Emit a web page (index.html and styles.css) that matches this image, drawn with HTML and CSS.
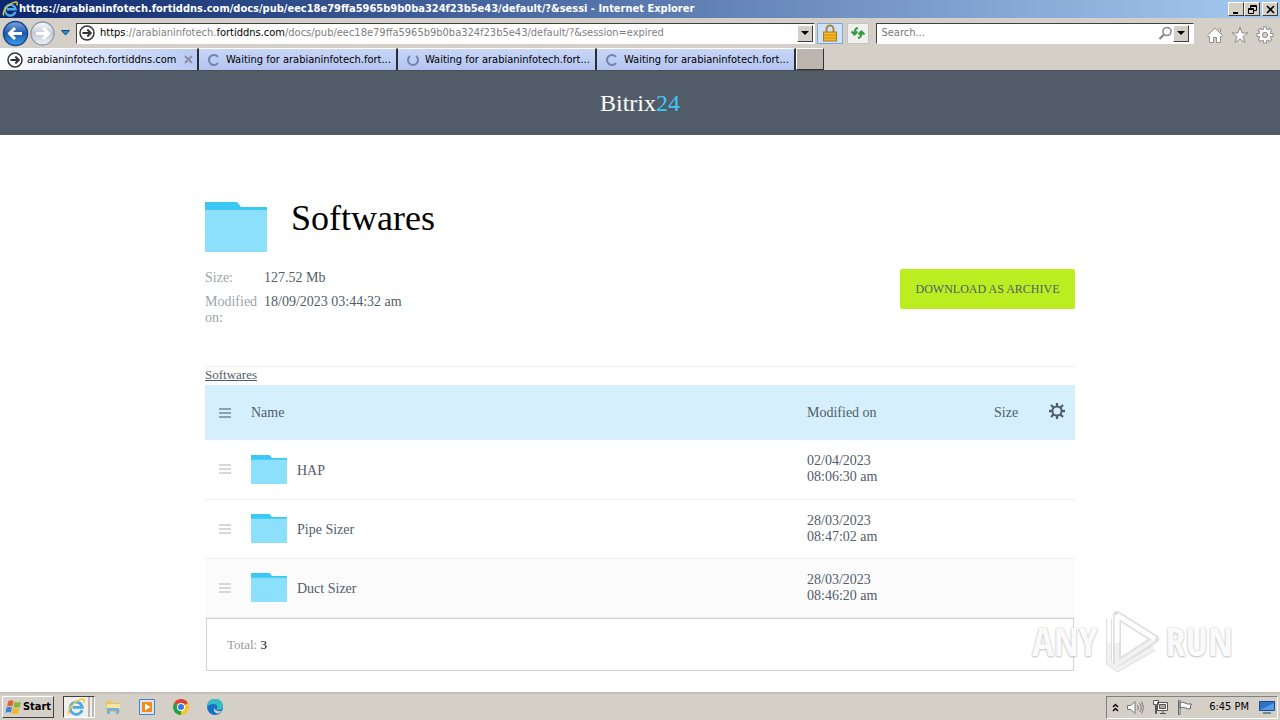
FILE: index.html
```html
<!DOCTYPE html>
<html lang="en">
<head>
<meta charset="utf-8">
<title>Softwares - Bitrix24</title>
<link rel="stylesheet" href="styles.css">
</head>
<body>
<svg class="defs" width="0" height="0" aria-hidden="true">
  <linearGradient id="blueball" x1="0" y1="0" x2="0" y2="1"><stop offset="0" stop-color="#7ba6dd"/><stop offset=".5" stop-color="#1d57ae"/><stop offset="1" stop-color="#3fa0ee"/></linearGradient>
  <linearGradient id="greyball" x1="0" y1="0" x2="0" y2="1"><stop offset="0" stop-color="#fafbfd"/><stop offset=".5" stop-color="#c3cbd8"/><stop offset="1" stop-color="#eef2f8"/></linearGradient>
  <symbol id="ie" viewBox="0 0 16 16"><path d="M13.400 10.800A5.400 5.400 0 1 1 13.600 8.300H5" fill="none" stroke="#4aa9e6" stroke-width="2.400"/><path d="M2 14.500C-1 12 6 3 12 1.300c4-1.200 3.600 1.500 2.600 3" fill="none" stroke="#f2c83c" stroke-width="1.400"/></symbol>
  <symbol id="site" viewBox="0 0 16 16"><circle cx="8" cy="8" r="7" fill="#fff" stroke="#333" stroke-width="1.500"/><path d="M3.500 8h8M8.300 4.500 11.800 8l-3.500 3.500" fill="none" stroke="#333" stroke-width="1.900"/></symbol>
  <symbol id="spin" viewBox="0 0 12 12"><path d="M10 3A5 5 0 1 0 10 9" fill="none" stroke="#7484b0" stroke-width="2"/></symbol>
  <symbol id="down" viewBox="0 0 8 4"><path d="M0 0h8L4 4z"/></symbol>
  <symbol id="folder" viewBox="0 0 62 50"><path d="M0 0h31q2 0 3.500 3l1.500 2h26v10H0z" fill="#3bc8f5"/><path d="M0 8h62v41q0 1-1 1H1q-1 0-1-1z" fill="#8ce0fb"/></symbol>
  <symbol id="grip" viewBox="0 0 12 10"><path d="M0 1h12M0 5h12M0 9h12" stroke="currentColor" stroke-width="2"/></symbol>
</svg>

<header class="window">
  <div class="titlebar">
    <svg class="i16"><use href="#ie"/></svg>
    <span class="caption">https://arabianinfotech.fortiddns.com/docs/pub/eec18e79ffa5965b9b0ba324f23b5e43/default/?&amp;sessi - Internet Explorer</span>
    <div class="winbtns">
      <button aria-label="Minimize"><svg width="9" height="9"><path d="M1 7h5v2H1z"/></svg></button>
      <button aria-label="Restore"><svg width="9" height="9" fill="none" stroke="#000"><path d="M2.500 3V.5h6v5H6M2.500 1.500h6M.5 3.500h5v5h-5zM.5 4.500h5"/></svg></button>
      <button class="close" aria-label="Close"><svg width="9" height="9" stroke="#000" stroke-width="1.600"><path d="M1 1l7 7M8 1 1 8"/></svg></button>
    </div>
  </div>
  <div class="navbar">
    <button class="plain" aria-label="Back"><svg width="27" height="27"><circle cx="13.500" cy="13.500" r="12" fill="url(#blueball)" stroke="#17468f" stroke-width="1.500"/><path d="M20 13.500H8M13 8l-5.500 5.500L13 19" fill="none" stroke="#fff" stroke-width="3"/></svg></button>
    <button class="plain" aria-label="Forward"><svg width="27" height="27"><circle cx="13.500" cy="13.500" r="11.500" fill="url(#greyball)" stroke="#8c98ab" stroke-width="1.300"/><path d="M7 13.500h12M14 8l5.500 5.500L14 19" fill="none" stroke="#fff" stroke-width="3"/></svg></button>
    <button class="plain recent" aria-label="Recent pages"><svg width="9" height="6"><path d="M.5.5h8L4.500 5z" fill="#1595c7" stroke="#174a78"/></svg></button>
    <div class="field address">
      <svg class="i16"><use href="#site"/></svg>
      <span class="url"><b>https</b>://arabianinfotech.<b>fortiddns.com</b>/docs/pub/eec18e79ffa5965b9b0ba324f23b5e43/default/?&amp;session=expired</span>
      <button class="drop" aria-label="Show addresses"><svg width="8" height="4"><use href="#down"/></svg></button>
    </div>
    <button class="tool lock" aria-label="Security report"><svg width="16" height="18"><path d="M4.500 9V5a3.500 3.500 0 0 1 7 0v4" fill="none" stroke="#a9873c" stroke-width="2"/><rect x="1.500" y="8" width="13" height="9" fill="#f3b829" stroke="#b07a12"/><path d="M2 11h12M2 14h12" stroke="#d08e12"/></svg></button>
    <button class="tool" aria-label="Refresh"><svg width="16" height="14" fill="none" stroke="#2f9b3e" stroke-width="2"><path d="M8 2Q4.500 2 4.500 8M1.500 5.500l3 3 3-3M8 12q3.500 0 3.500-6M8.500 8.500l3-3 3 3"/></svg></button>
    <div class="field search">
      <input type="text" placeholder="Search..." aria-label="Search">
      <svg width="15" height="15" fill="none" stroke="#888"><circle cx="9" cy="5.500" r="4" stroke-width="1.600"/><path d="M6 8.500 1.500 13" stroke-width="2.300"/></svg>
      <button class="drop" aria-label="Search providers"><svg width="8" height="4"><use href="#down"/></svg></button>
    </div>
    <div class="tools">
      <button class="plain" aria-label="Home"><svg width="18" height="18" fill="#fff" stroke="#909090"><path d="M1.500 9.500 9 2l7.500 7.500-1.500 1.500-.5-.5v6h-4v-5h-3v5h-4v-6l-.5.5zM12.500 3h2v3"/></svg></button>
      <button class="plain" aria-label="Favorites"><svg width="18" height="18" fill="#fff" stroke="#909090"><path d="M9 1l2 6h6l-5 3.500 2 6-5-3.500-5 3.500 2-6L1 7h6z"/></svg></button>
      <button class="plain" aria-label="Tools"><svg width="18" height="18" fill="none"><path d="M9 .5v17M.5 9h17M3 3l12 12M3 15 15 3" stroke="#909090" stroke-width="4"/><circle cx="9" cy="9" r="6" fill="#fff" stroke="#909090"/><path d="M9 1.500v15M1.500 9h15M3.700 3.700l10.600 10.600M3.700 14.300 14.300 3.700" stroke="#fff" stroke-width="2.200"/><circle cx="9" cy="9" r="2.700" fill="#d4d0c8" stroke="#909090"/></svg></button>
    </div>
  </div>
  <nav class="tabs">
    <button class="tab active"><svg class="i16"><use href="#site"/></svg><span>arabianinfotech.fortiddns.com</span><svg class="x" width="9" height="9" stroke="#8a8f9e" stroke-width="1.800"><path d="M1 1l7 7M8 1 1 8"/></svg></button>
    <button class="tab"><svg class="i12"><use href="#spin"/></svg><span>Waiting for arabianinfotech.fort...</span></button>
    <button class="tab"><svg class="i12 turn"><use href="#spin"/></svg><span>Waiting for arabianinfotech.fort...</span></button>
    <button class="tab"><svg class="i12"><use href="#spin"/></svg><span>Waiting for arabianinfotech.fort...</span></button>
    <button class="newtab" aria-label="New tab"></button>
  </nav>
</header>

<div class="brand">Bitrix<span>24</span></div>

<main class="page">
  <div class="heading"><svg width="62" height="50"><use href="#folder"/></svg><h1>Softwares</h1></div>
  <div class="summary">
    <dl>
      <dt>Size:</dt><dd>127.52 Mb</dd>
      <dt>Modified on:</dt><dd>18/09/2023 03:44:32 am</dd>
    </dl>
    <button class="download">DOWNLOAD AS ARCHIVE</button>
  </div>
  <div class="crumbs"><a href="#">Softwares</a></div>
  <table class="files">
    <thead>
      <tr><th class="grip"><svg width="12" height="10"><use href="#grip"/></svg></th><th>Name</th><th class="date">Modified on</th><th class="size">Size</th><th class="gear"><button class="plain" aria-label="Columns"><svg width="16" height="16" fill="none" stroke="#525c69"><circle cx="8" cy="8" r="4.600" stroke-width="2"/><path d="M8 0v3M8 13v3M0 8h3M13 8h3M2 2l2.500 2.500M11.500 11.500l2.500 2.500M2 14l2.500-2.500M11.500 4.500 14 2" stroke-width="2.300"/></svg></button></th></tr>
    </thead>
    <tbody>
      <tr><td class="grip"><svg width="12" height="10"><use href="#grip"/></svg></td><td><div class="name"><svg width="36" height="29"><use href="#folder"/></svg><span>HAP</span></div></td><td class="date">02/04/2023<br>08:06:30 am</td><td></td><td></td></tr>
      <tr><td class="grip"><svg width="12" height="10"><use href="#grip"/></svg></td><td><div class="name"><svg width="36" height="29"><use href="#folder"/></svg><span>Pipe Sizer</span></div></td><td class="date">28/03/2023<br>08:47:02 am</td><td></td><td></td></tr>
      <tr class="hover"><td class="grip"><svg width="12" height="10"><use href="#grip"/></svg></td><td><div class="name"><svg width="36" height="29"><use href="#folder"/></svg><span>Duct Sizer</span></div></td><td class="date">28/03/2023<br>08:46:20 am</td><td></td><td></td></tr>
    </tbody>
  </table>
  <div class="total">Total: <b>3</b></div>
</main>

<div class="watermark" aria-label="ANY RUN">
  <span>ANY</span>
  <svg width="60" height="64" fill="none" stroke-linejoin="round"><g stroke="#dedede"><path d="M16 6 54 30 16 55z" stroke-width="8"/><path d="M8 10v44l9 6 36-21" stroke-width="6"/></g><g stroke="#f1f1f1"><path d="M54 30 16 55V6M8 34v20l9 6 36-21" stroke-width="4"/></g><g stroke="#fff"><path d="M16 6 54 30M16 6v28" stroke-width="5"/><path d="M8 10v24" stroke-width="4"/></g></svg>
  <span>RUN</span>
</div>

<footer class="taskbar">
  <button class="start"><svg width="17" height="17" viewBox="0 0 16 16"><path d="M3 2q3-1.500 5 0L7 7Q5 5.500 2 7z" fill="#e8612c"/><path d="M9 2.500q3 1.500 6 0L14 7.500q-3 1.500-6 0z" fill="#83b93c"/><path d="M1.500 8q3-1.500 5 0l-1 5q-2-1.500-5 0z" fill="#3e83d2"/><path d="M7.500 8.500q3 1.500 6 0l-1 5q-3 1.500-6 0z" fill="#f4b62a"/></svg>Start</button>
  <div class="apps">
    <button class="running" aria-label="Internet Explorer"><svg width="20" height="18"><use href="#ie"/></svg><i></i><i></i></button>
    <button class="plain" aria-label="Explorer"><svg width="16" height="16"><path d="M1 2h6l1 2h7v9H1z" fill="#e9c75d"/><path d="M2 5h13v5H2z" fill="#f8e6a0"/><path d="M2 15V9h12v6h-3v-3H5v3z" fill="#6fb2dd"/></svg></button>
    <button class="plain" aria-label="Media Player"><svg width="16" height="16"><path d="M.5.5h15v15H.5z" fill="#d7e6f5" stroke="#4d83bb"/><path d="M3 3h10v10H3z" fill="#f18b1e"/><path d="M6 4.500 11.500 8 6 11.500z" fill="#fff"/></svg></button>
    <button class="plain" aria-label="Chrome"><svg width="16" height="16"><circle cx="8" cy="8" r="8" fill="#f8c622"/><path d="M8 8 1.100 4A8 8 0 0 1 15 4z" fill="#df4234"/><path d="M8 8H8L8 16A8 8 0 0 1 1.100 4z" fill="#27a04d"/><circle cx="8" cy="8" r="4" fill="#fff"/><circle cx="8" cy="8" r="3" fill="#3b78e8"/></svg></button>
    <button class="plain" aria-label="Edge"><svg width="16" height="16"><circle cx="8" cy="8" r="8" fill="#1670c4"/><path d="M0 8A8 8 0 0 1 16 7q0 4-5 4-2 0-1-2 1-4-3-4-5 0-7 3z" fill="#35bcc7"/><path d="M8 7q-2 4 3 5 2 .5 4-.5-2 3-5 3-5-2-2-7.500z" fill="#d4d0c8"/></svg></button>
  </div>
  <div class="tray">
    <svg width="7" height="9" fill="none" stroke="#000" stroke-width="1.400"><path d="M1 4l2.500-2.500L6 4M1 8l2.500-2.500L6 8"/></svg>
    <svg width="17" height="15" fill="#fff" stroke="#777"><path d="M.5 5.500H4L8 1.500v12L4 9.500H.5z"/><path d="M10.500 5q2 2.500 0 5M12.500 3q3.500 4.500 0 9M14.500 1.500q3.500 6 0 12" fill="none"/></svg>
    <svg width="17" height="16" fill="#fff" stroke="#555"><path d="M5.500 3.500h10v8h-10zM8 14.500h6M11 11.500v3M1.500 1.500h5v4h-2v9h-1v-9h-2z"/><path d="M7.500 5.500h6v4h-6z" fill="#aaa"/></svg>
    <svg width="17" height="15" fill="#fff" stroke="#666"><path d="M1.500.5h1.500v14H1.500zM3 2.500q3-1 5 .5t6.500 1q-1.500 2-1 4.500-3 1-5-.5t-5.500 0z"/></svg>
    <time>6:45 PM</time>
    <svg width="16" height="13"><path d="M.5.5h15v9H.5z" fill="#2e71c6" stroke="#174c95"/><path d="M1 9 15 2v7z" fill="#559bea"/><path d="M4 11h8v2H4z" fill="#788"/></svg>
  </div>
</footer>
</body>
</html>
```
FILE: styles.css
```css
* { box-sizing: border-box; }
body {
  margin: 0;
  min-height: 100vh;
  display: flex;
  flex-direction: column;
  background: #fff;
  color: #525c69;
  font: 14px/16px "Liberation Serif", serif;
}
.defs { position: absolute; }
svg { display: block; flex: none; }
button { font: inherit; color: inherit; padding: 0; margin: 0; }
.i16 { width: 16px; height: 16px; }
.i12 { width: 12px; height: 12px; }
.turn { transform: rotate(-90deg); }
.plain { background: none; border: 0; }

.window, .taskbar {
  font: 11px/14px "DejaVu Sans Condensed", "DejaVu Sans", sans-serif;
  color: #000;
  background: #d4d0c8;
}
.titlebar {
  display: flex;
  align-items: center;
  height: 18px;
  padding: 0 2px;
  gap: 1px;
  background: linear-gradient(90deg, #0c276c, #a6caf0);
  color: #fff;
  font-weight: bold;
}
.caption { flex: 1; white-space: nowrap; overflow: hidden; }
.winbtns { display: flex; }
.winbtns button, .drop, .start {
  display: flex;
  align-items: center;
  justify-content: center;
  background: #d4d0c8;
  border: 1px solid;
  border-color: #fff #404040 #404040 #fff;
}
.winbtns button { width: 16px; height: 14px; }
.winbtns .close { margin-left: 2px; }

.navbar { display: flex; align-items: center; height: 30px; padding: 0 6px 0 2px; }
.recent { padding: 0 6px 0 5px; }
.field {
  display: flex;
  align-items: center;
  height: 21px;
  background: #fff;
  border: 1px solid;
  border-color: #404040 #fff #fff #404040;
}
.address { flex: 746; padding-left: 2px; gap: 5px; color: #808080; }
.url { flex: 1; white-space: nowrap; overflow: hidden; }
.url b { font-weight: normal; color: #000; }
.drop { width: 16px; height: 17px; margin-right: 1px; }
.tool {
  display: flex;
  align-items: center;
  justify-content: center;
  width: 22px;
  height: 21px;
  margin-left: 4px;
  background: #f0f0ee;
  border: 1px solid #c4c4c4;
}
.tool.lock { width: 26px; margin-left: 2px; background: #cfe2fa; border-color: #7da7dd; }
.search { flex: 313; margin-left: 7px; padding: 0 3px 0 4px; }
.search input {
  flex: 1;
  min-width: 0;
  border: 0;
  padding: 0;
  background: none;
  font: inherit;
}
.search input::placeholder { color: #777; opacity: 1; }
.tools { display: flex; gap: 7px; margin-left: 12px; padding-top: 4px; }

.tabs { display: flex; height: 23px; border-bottom: 1px solid #4a4f58; }
.tab {
  display: flex;
  align-items: center;
  width: 199px;
  padding: 0 4px 0 9px;
  gap: 6px;
  background: linear-gradient(#c9d6f7, #b3c4ef);
  border: 0;
  border-right: 2px solid #2c2c34;
  border-top: 1px solid #fff;
  white-space: nowrap;
}
.tab.active { gap: 4px; padding-left: 7px; background: linear-gradient(90deg, #fff, #dde6fc 40%, #b9caf5); }
.tab span { flex: 1; text-align: left; }
.newtab { width: 28px; background: #bcb6ae; border: 1px solid; border-color: #fff #333 #333 #fff; }

.brand {
  height: 64px;
  background: #525c69;
  color: #fff;
  text-align: center;
  font-size: 24px;
  line-height: 64px;
}
.brand span { color: #3bc8f5; }

.page { flex: 1; width: 100%; max-width: 870px; margin: 0 auto; padding: 67px 0 21px; }
.heading { display: flex; gap: 24px; }
.heading h1 { margin: 0; color: #000; font-weight: normal; font-size: 36px; line-height: 32px; }
.summary { display: flex; justify-content: space-between; align-items: flex-start; padding: 17px 0 40px; }
dl { display: grid; grid-template-columns: 52px auto; gap: 8px 7px; margin: 0; padding-top: 1px; }
dt { color: #a1a4a9; }
dd { margin: 0; }
.download {
  width: 175px;
  height: 40px;
  background: #bbed21;
  border: 0;
  border-radius: 2px;
  font-size: 12px;
}
.crumbs { border-top: 1px solid #eef0f1; padding-bottom: 2px; font-size: 13px; }
.crumbs a { color: #525c69; }

.files { width: 100%; border-collapse: collapse; table-layout: fixed; }
.files th, .files td { padding: 0; text-align: left; font-weight: normal; }
.files thead { background: #d5f0fc; }
.files thead tr { height: 55px; }
.files tbody tr { height: 59px; border-bottom: 1px solid #edeef0; }
.files .hover { background: #fbfbfc; }
.files .grip { width: 46px; padding-left: 14px; color: #d5d7d9; }
.files th.grip { color: #8ba1ae; }
.files .date { width: 187px; }
.files .size { width: 55px; }
.files .gear { width: 26px; }
.name { display: flex; align-items: center; gap: 10px; }
.name span { padding-top: 3px; }
.total {
  margin: 0 1px;
  padding: 18px 20px 17px;
  border: 1px solid #d2d3d5;
  color: #999;
  font-size: 13px;
}
.total b { font-weight: normal; color: #000; }

.watermark {
  position: absolute;
  right: 47px;
  bottom: 47px;
  display: flex;
  align-items: center;
  gap: 4px;
  font: 40px/64px "Liberation Sans Narrow", "Open Sans Condensed", sans-serif;
  color: #fafafa;
  text-shadow: 0 0 2px #c0c0c0, 0 1px 2px #c8c8c8;
}

.taskbar {
  display: flex;
  align-items: center;
  height: 28px;
  padding: 0 2px 0 2px;
  border-top: 2px solid #c4c0b8;
}
.start { height: 22px; width: 52px; font-weight: bold; gap: 1px; }
.apps { display: flex; align-items: center; gap: 18px; margin-left: 9px; }
.running {
  display: flex;
  align-items: center;
  gap: 2px;
  width: 32px;
  height: 22px;
  margin-right: -8px;
  padding: 0 0 0 2px;
  background: #f1efeb;
  border: 1px solid;
  border-color: #404040 #fff #fff #404040;
}
.running i { width: 2px; height: 20px; background: #bdb9b1; }
.tray {
  display: flex;
  align-items: center;
  height: 23px;
  margin-left: auto;
  padding: 0 2px 0 5px;
  gap: 8px;
  border: 1px solid;
  border-color: #808080 #fff #fff #808080;
}
.tray time { margin: 0 2px 0 7px; }
```
